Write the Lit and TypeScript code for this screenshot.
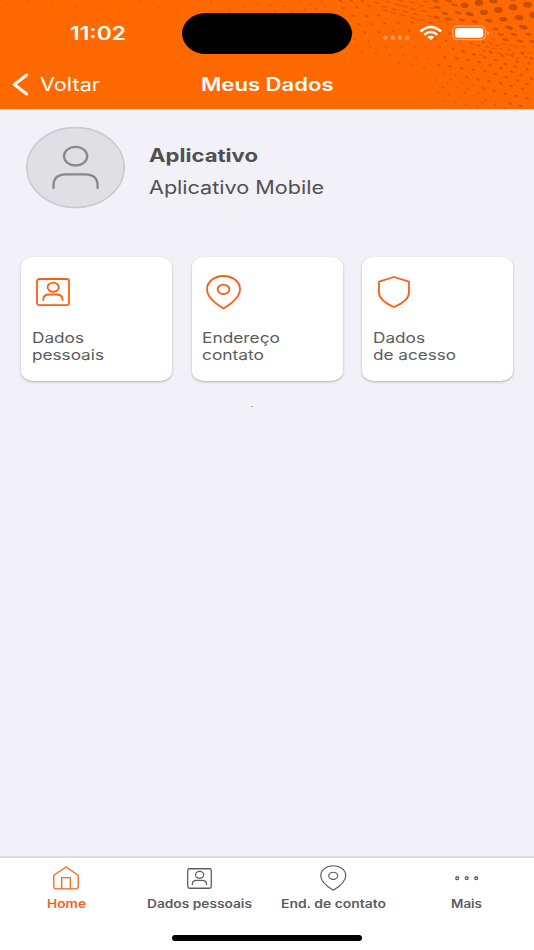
import { LitElement, html, svg, css } from "lit";
import { customElement, property } from "lit/decorators.js";

// Halftone dots of the header: [x, y, rx, ry, opacity]
type Dot = [number, number, number, number, number];

const place = (ox: number, oy: number, rx: number, ry: number, o: number, pts: number[][]): Dot[] =>
  pts.map(([x, y, a, b]) => [ox + x / 3, oy + y / 3, (a ?? rx) / 3, (b ?? ry) / 3, o]);

const DOTS: Dot[] = [
  ...place(434, 0, 12, 7, 0.85, [
    [135, 8, 13, 9], [92, 16, 12, 8], [178, 2, 13, 8], [150, 37, 12, 8], [193, 30, 13, 9], [237, 22, 13, 9],
    [280, 14, 13, 9], [107, 42, 12, 6], [165, 62, 11, 5], [208, 58, 12, 7], [255, 53, 13, 8], [297, 45, 11, 9],
    [225, 83, 12, 5], [268, 81, 13, 6], [236, -6, 13, 8],
  ]),
  ...place(434, 0, 10, 4, 0.7, [
    [62, 15], [72, 38], [33, 40], [10, 22], [45, 3], [185, 87], [122, 65], [84, 60], [44, 57], [5, 3],
    [200, 103], [240, 103], [283, 103], [258, 123], [295, 125], [215, 119], [8, 52],
  ]),
  ...place(434, 0, 7.5, 2.3, 0.42, [
    [20, 66], [40, 72], [178, 118], [170, 130], [190, 136], [210, 132], [232, 137], [160, 140], [181, 147],
    [202, 146], [224, 150], [247, 140], [270, 140], [150, 152], [172, 158], [195, 160], [218, 163], [240, 160],
    [265, 157], [288, 158], [142, 164], [250, 173], [276, 172],
  ]),
  ...place(434, 0, 5, 3, 0.6, [
    [15, 98], [48, 101], [78, 121], [36, 123], [3, 116], [110, 130], [57, 146], [88, 154], [120, 163],
    [18, 142], [135, 137], [148, 127],
  ]),
  ...place(434, 50, 5.8, 3.3, 0.65, [
    [32, 22], [68, 25], [102, 30], [87, 4], [119, 13], [152, 22], [136, 37], [168, 46], [14, 44], [48, 49],
    [83, 55], [118, 59], [152, 64], [184, 72], [200, 55], [217, 81], [233, 65], [98, 81], [132, 88], [166, 94],
    [200, 100], [232, 108], [250, 92], [265, 117], [280, 102], [148, 115], [180, 123], [214, 131], [247, 138],
    [280, 145], [262, 76], [292, 86], [260, 168], [228, 160], [185, 30], [215, 42], [245, 50], [170, 5],
    [205, 17], [235, 17], [250, 35], [285, 40], [280, 58], [265, 10], [292, 25],
  ]),
  ...place(434, 50, 4, 2.5, 0.45, [
    [32, 67], [65, 74], [7, 90], [50, 88], [83, 97], [116, 106], [40, 100], [70, 112], [103, 118], [134, 129],
    [122, 138], [45, 134], [81, 139], [63, 157], [97, 164], [130, 172], [183, 163], [155, 150], [215, 174],
    [26, 110], [12, 128], [92, 128], [32, 147], [145, 157], [170, 144],
  ]),
  ...place(334, 0, 6, 3, 0.58, [
    [20, 3], [52, 3], [85, 3], [27, 24], [68, 22], [105, 18], [57, 47], [98, 48], [133, 45], [74, 74], [112, 73],
    [152, 70], [193, 68], [53, 97], [93, 97], [135, 96], [178, 94], [225, 93], [235, 68],
  ]),
  ...place(334, 0, 4.5, 2.5, 0.45, [
    [62, 118], [105, 122], [70, 137], [108, 140], [155, 142], [200, 140], [243, 140], [277, 143],
    [85, 157], [125, 160], [167, 165], [207, 166], [246, 170], [285, 176], [195, 190], [232, 196], [270, 205],
  ]),
  ...place(334, 0, 3, 1.8, 0.3, [
    [40, 160], [155, 180], [180, 210], [210, 220], [245, 225], [230, 240], [165, 240], [150, 250], [190, 255],
    [225, 270], [265, 263], [240, 290], [275, 292], [130, 205], [95, 200], [60, 180], [120, 182], [85, 220],
    [135, 262], [180, 285], [208, 296], [260, 236], [283, 250],
  ]),
  ...place(334, 0, 9, 2.6, 0.5, [
    [130, 9], [163, 6], [198, 2], [150, 21], [178, 27], [192, 14], [212, 20], [215, 36], [235, 8], [238, 27],
    [245, 42], [262, 17], [275, 5], [270, 34], [286, 48], [292, 24], [205, 45], [236, 54], [265, 60], [290, 68],
    [178, 39], [155, 31],
  ]),
  ...place(0, 0, 3.5, 2.5, 0.35, [
    [20, 14], [84, 4], [158, 17], [228, 20], [295, 28], [358, 41], [418, 3], [477, 22], [534, 42],
  ]),
  ...place(0, 0, 2.2, 2, 0.22, [
    [25, 60], [92, 64], [163, 68], [35, 100], [100, 107], [167, 115], [295, 133], [361, 142], [418, 86],
    [480, 105], [428, 148], [493, 153],
  ]),
  ...place(170, 0, 4.5, 3, 0.45, [
    [123, 5], [178, 31], [220, 20], [263, 14], [300, 15], [315, 33], [343, 18], [365, 35], [390, 5], [405, 30],
    [420, 12], [455, 5], [440, 25], [465, 20],
  ]),
  ...place(170, 0, 2.5, 1.8, 0.25, [
    [545, 178], [580, 190], [500, 165], [520, 185], [470, 172], [420, 178], [380, 168], [330, 175], [290, 168],
    [560, 205], [490, 200], [450, 190], [530, 215], [585, 222],
  ]),
];

const ICONS: Record<string, unknown> = {
  badge: svg`<rect x="1" y="1" width="32" height="26.2" rx="2.4"/>
    <ellipse cx="17.2" cy="9.2" rx="5.6" ry="4.6"/>
    <path d="M7.3 22.8v-1.5q0-4.8 6.2-4.8h6.8q6.2 0 6.2 4.8v1.5"/>`,
  pin: svg`<path d="M17.5 33.5C9 28.3 1 21.5 1 14.2C1 6.8 8.3 1 17.5 1S34 6.8 34 14.2C34 21.5 26 28.3 17.5 33.5Z"/>
    <ellipse cx="17.5" cy="14.3" rx="5.9" ry="4.7"/>`,
  shield: svg`<path d="M16 1L31 5.6V16.5C31 23 24 27.6 16 31C8 27.6 1 23 1 16.5V5.6Z"/>`,
  home: svg`<path d="M.8 9.300L13 1L25.200 9.300V20.300Q25.200 22.800 22.400 22.800H3.600Q.8 22.800 .8 20.300Z"/>
    <path d="M8.700 22.800V11.700H17.300V22.800"/>`,
  more: svg`<circle cx="2.200" cy="2.200" r="1.450"/><circle cx="11.700" cy="2.200" r="1.450"/><circle cx="21.200" cy="2.200" r="1.450"/>`,
};

@customElement("wide-text")
class WideText extends LitElement {
  @property() text = "";
  @property({ type: Number }) width = 50;
  @property({ type: Number }) size = 18;
  @property({ type: Number }) weight = 400;
  static styles = css`
    :host { display: block; flex: none; }
    svg { display: block; overflow: visible; }
    text { font-family: Inter, "Liberation Sans", sans-serif; fill: currentColor; }
  `;
  render() {
    const h = Math.round(this.size * 1.2);
    return html`<svg width=${this.width} height=${h}>
      <text x="0" y=${this.size} font-size=${this.size} font-weight=${this.weight}
        textLength=${this.width} lengthAdjust="spacingAndGlyphs">${this.text}</text>
    </svg>`;
  }
}

@customElement("line-icon")
class LineIcon extends LitElement {
  @property() name = "badge";
  @property() box = "0 0 34 34";
  @property({ type: Number }) w = 34;
  @property({ type: Number }) h = 34;
  @property({ type: Number }) stroke = 1.8;
  static styles = css`
    :host { display: block; flex: none; }
    svg { display: block; overflow: visible; fill: none; stroke: currentColor; stroke-linejoin: round; }
  `;
  render() {
    return html`<svg width=${this.w} height=${this.h} viewBox=${this.box} preserveAspectRatio="none"
      stroke-width=${this.stroke}>${ICONS[this.name]}</svg>`;
  }
}

const CARDS = [
  { icon: "badge", w: 34, h: 28.2, lines: [["Dados", 52], ["pessoais", 72]] },
  { icon: "pin", w: 35, h: 34.5, lines: [["Endereço", 78], ["contato", 62]] },
  { icon: "shield", w: 32, h: 32, lines: [["Dados", 52], ["de acesso", 83]] },
] as const;

const TABS = [
  { icon: "home", box: "0 0 26 23.6", w: 26, h: 23.6, s: 1.3, label: "Home", lw: 39 },
  { icon: "badge", box: "0 0 34 28.2", w: 25, h: 21, s: 1.7, label: "Dados pessoais", lw: 105 },
  { icon: "pin", box: "0 0 35 34.5", w: 26.5, h: 26, s: 1.6, label: "End. de contato", lw: 105 },
  { icon: "more", box: "0 0 23.4 4.4", w: 23.4, h: 4.4, s: 1.3, label: "Mais", lw: 31 },
];

@customElement("app-root")
class AppRoot extends LitElement {
  static styles = css`
    :host { display: flex; flex-direction: column; width: 534px; height: 950px; background: #f2f1f7; overflow: hidden; }
    header { position: relative; height: 109px; flex: none; background: #ff6900; color: #fff; border-bottom: 1px solid #ece2df; box-sizing: content-box; }
    .dots { position: absolute; inset: 0; width: 534px; height: 109px; fill: #bb4b00; overflow: hidden; }
    .status { position: relative; display: grid; grid-template-columns: 182px 170px 1fr; height: 66px; align-items: center; }
    .time { padding: 0 0 2px 69.5px; }
    .island { height: 41px; border-radius: 24px / 20.5px; background: #000; }
    .signals { display: block; }
    .nav { position: relative; display: grid; grid-template-columns: 200.5px 1fr; height: 43px; align-items: start; padding-top: 7px; box-sizing: border-box; }
    .back { display: flex; padding-left: 12px; gap: 8px; }
    .back svg { display: block; }
    .profile { display: flex; gap: 23.500px; padding: 17px 0 0 26px; color: #505052; height: 130px; box-sizing: border-box; }
    .avatar { display: block; }
    .names { display: flex; flex-direction: column; gap: 10px; padding-top: 17px; }
    .cards { display: grid; grid-template-columns: repeat(3, 151px); gap: 19.500px; padding: 17px 0 0 21px; }
    .card { height: 123.500px; box-sizing: border-box; background: #fff; border-radius: 12px / 10px; box-shadow: 0 1px 2.500px rgba(0,0,0,.28); color: #5c5c5e; display: grid; grid-template-rows: 71.500px 17px 17px; padding-left: 10.500px; }
    .pic { display: flex; width: 43px; height: 70px; align-items: center; justify-content: center; color: #fb5f14; }
    .speck { width: 2px; height: 1px; margin: 25.500px 0 0 251px; background: #a5a4a8; }
    .tabs { margin-top: auto; height: 94px; flex: none; box-sizing: border-box; border-top: 2px solid #dcdbe1; background: #fff; display: grid; grid-template-columns: repeat(4, 1fr); grid-template-rows: 77px 1fr; }
    .tab { display: flex; flex-direction: column; align-items: center; color: #5c5c5e; margin-left: -1px; }
    .tab.on { color: #fb6116; }
    .glyph { height: 39px; display: flex; align-items: center; padding-top: 1px; box-sizing: border-box; }
    .home-bar { grid-column: 1 / -1; justify-self: center; width: 190px; height: 5.500px; border-radius: 3px; background: #000; }
  `;

  render() {
    return html`
      <header>
        <svg class="dots" viewBox="0 0 534 109">
          ${DOTS.map(([x, y, rx, ry, o]) => svg`<ellipse cx=${x} cy=${y} rx=${rx} ry=${ry} opacity=${o}
            transform=${`rotate(${rx / ry > 1.8 ? 14 : rx > 3 ? 4 : 22} ${x} ${y})`}/>`)}
        </svg>
        <div class="status">
          <div class="time"><wide-text text="11:02" width="56" size="18.5" weight="600"></wide-text></div>
          <div class="island"></div>
          <svg class="signals" width="182" height="66">
            <g fill="#fff" opacity=".3">
              <circle cx="33.500" cy="37.800" r="2.200"/><circle cx="40.800" cy="37.800" r="2.200"/>
              <circle cx="48" cy="37.800" r="2.200"/><circle cx="55.300" cy="37.800" r="2.200"/>
            </g>
            <g fill="none" stroke="#fff" stroke-width="2.600">
              <path d="M68.600 31.400Q78.800 22.600 89 31.400"/>
              <path d="M72.300 34.700Q78.800 29.300 85.300 34.700"/>
            </g>
            <path fill="#fff" d="M75.200 37.100Q78.800 34.200 82.400 37.100L78.800 40.100Z"/>
            <rect x="100.800" y="26" width="32.700" height="13.600" rx="4.500" fill="none" stroke="#fff" stroke-opacity=".5" stroke-width="1.100"/>
            <rect x="103" y="27.900" width="28.300" height="9.900" rx="3" fill="#fff"/>
            <path fill="#fff" opacity=".5" d="M135 30.800Q137.200 31.600 137.200 33T135 35.100Z"/>
          </svg>
        </div>
        <div class="nav">
          <div class="back">
            <svg width="20" height="24"><path d="M14.700 2L2.300 11.500L14.700 21" fill="none" stroke="#fff" stroke-width="2.900" stroke-linecap="round" stroke-linejoin="round"/></svg>
            <wide-text text="Voltar" width="60" size="18.3"></wide-text>
          </div>
          <wide-text text="Meus Dados" width="132.5" size="18.3" weight="600"></wide-text>
        </div>
      </header>
      <section class="profile">
        <svg class="avatar" width="99" height="82">
          <ellipse cx="49.500" cy="40.500" rx="48.700" ry="40" fill="#e0dfe4" stroke="#cbcacf" stroke-width="1.700"/>
          <g fill="none" stroke="#89898b" stroke-width="2.300">
            <ellipse cx="49.600" cy="29.200" rx="11.600" ry="9.300"/>
            <path d="M27.500 62V58.500Q27.500 47.300 40 47.300H59Q71.600 47.300 71.600 58.500V62"/>
          </g>
        </svg>
        <div class="names">
          <wide-text text="Aplicativo" width="109" size="18.3" weight="700"></wide-text>
          <wide-text text="Aplicativo Mobile" width="175" size="18.3"></wide-text>
        </div>
      </section>
      <section class="cards">
        ${CARDS.map((c) => html`<div class="card">
          <div class="pic"><line-icon name=${c.icon} w=${c.w} h=${c.h} box=${`0 0 ${c.w} ${c.h}`}></line-icon></div>
          ${c.lines.map(([t, w]) => html`<wide-text text=${t} width=${w} size="14.3"></wide-text>`)}
        </div>`)}
      </section>
      <div class="speck"></div>
      <nav class="tabs">
        ${TABS.map((t, i) => html`<div class="tab ${i === 0 ? "on" : ""}">
          <div class="glyph"><line-icon name=${t.icon} w=${t.w} h=${t.h} box=${t.box} stroke=${t.s}></line-icon></div>
          <wide-text text=${t.label} width=${t.lw} size="11.3" weight="600"></wide-text>
        </div>`)}
        <div class="home-bar"></div>
      </nav>
    `;
  }
}
